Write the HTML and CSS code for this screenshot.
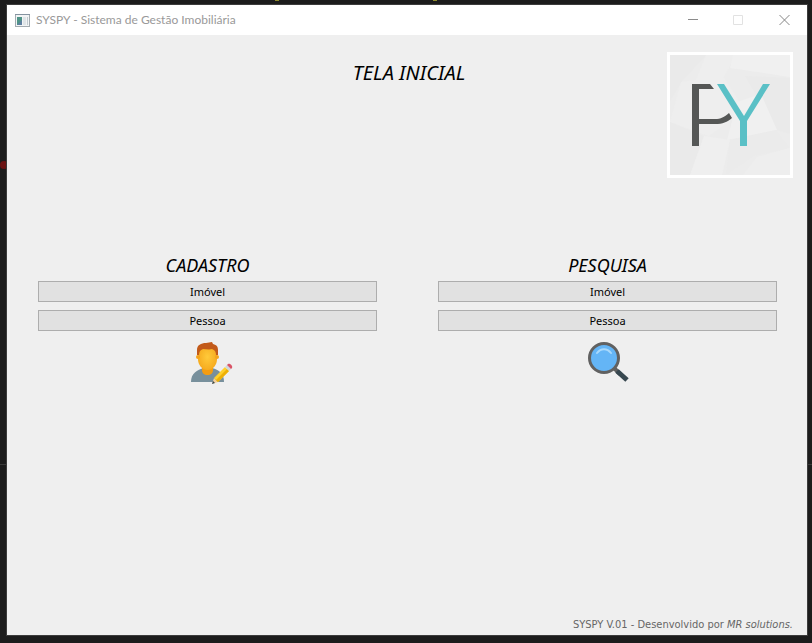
FILE: index.html
```html
<!DOCTYPE html>
<html lang="pt-BR">
<head>
<meta charset="utf-8">
<title>SYSPY - Sistema de Gestão Imobiliária</title>
<link rel="stylesheet" href="styles.css">
</head>
<body>
<svg class="backdrop" aria-hidden="true">
  <path d="M275 0h4M433 0h4" stroke="#8d8a2c" stroke-width="2"/>
  <circle cx="4" cy="165" r="4" fill="#6b1313"/>
  <path d="M0 464.500h812" stroke="#3a3a3a"/>
</svg>
<div class="window">
  <header class="titlebar">
    <svg class="app-icon" width="15" height="13" viewBox="0 0 15 13" aria-hidden="true">
      <rect x=".5" y=".5" width="14" height="12" fill="#f2f4f5" stroke="#a3abb0"/>
      <path d="M0 .5h15" stroke="#8593a0"/>
      <rect x="2" y="3" width="5" height="8" fill="#4f9488"/>
      <path d="M2 11l5-5v5z" fill="#5f7fa0"/>
      <rect x="8" y="3" width="3" height="8" fill="#dfe4e7"/>
      <rect x="12" y="3" width="1" height="8" fill="#c2cbd0"/>
    </svg>
    <span class="caption">SYSPY - Sistema de Gestão Imobiliária</span>
    <div class="controls">
      <button type="button" aria-label="Minimizar"><svg width="11" height="11" viewBox="0 0 11 11"><path d="M1 4.500h10" stroke="#8b8b8b"/></svg></button>
      <button type="button" aria-label="Maximizar" disabled><svg width="11" height="11" viewBox="0 0 11 11"><path d="M.5 .5h9v9h-9z" fill="none" stroke="#e2e2e2"/></svg></button>
      <button type="button" aria-label="Fechar"><svg width="11" height="11" viewBox="0 0 11 11"><path d="M.5 0l10 10M10.500 0l-10 10" stroke="#858585"/></svg></button>
    </div>
  </header>
  <main class="content">
    <div class="top">
      <h1>TELA INICIAL</h1>
      <svg class="logo" width="126" height="126" viewBox="0 0 126 126" role="img" aria-label="PY">
        <rect width="126" height="126" fill="#fff"/>
        <rect x="3" y="3" width="120" height="120" fill="#ececec"/>
        <path d="M3 3h36l-24 26-12 20z" fill="#eaeaea"/>
        <path d="M39 3h30l-12 22-30 8z" fill="#eee"/>
        <path d="M66 3h57v22l-60-9z" fill="#f0f0f0"/>
        <path d="M14 30l42-6 22 34-36 26-39-14z" fill="#eee"/>
        <path d="M78 24l45 2v56l-14-4z" fill="#eaeaea"/>
        <path d="M70 50l24-8 16 36-50 10z" fill="#f0f0f0"/>
        <path d="M3 70l34 14-14 39H3z" fill="#eaeaea"/>
        <path d="M37 84l26 4-8 35H23z" fill="#efefef"/>
        <path d="M63 88l46-10 14 18-36 8-28 19z" fill="#ebebeb"/>
        <path d="M123 96v27H76l14-18z" fill="#eee"/>
        <path d="M25 32h18l4 5H32v30h16c6 0 9-2 14-6l3 5c-5 4-9 6-17 6H32v22h-7z" fill="#555756"/>
        <path d="M50 32h7l20 32 19-32h7L80 69v25h-7V69z" fill="#5ac0c6"/>
      </svg>
    </div>
    <div class="groups">
      <section class="group">
        <h2>CADASTRO</h2>
        <button type="button">Imóvel</button>
        <button type="button">Pessoa</button>
        <svg class="picture" width="50" height="44" viewBox="-8 0 50 44" aria-hidden="true">
          <defs>
            <radialGradient id="skin">
              <stop offset="0" stop-color="#ffca3a"/>
              <stop offset="1" stop-color="#f6ac20"/>
            </radialGradient>
          </defs>
          <path d="M0 41c0-9 6-12 13-14h8c7 2 12 5 12 14z" fill="#78909c"/>
          <path d="M11 24h11v5c0 3-2 5-5.500 5S11 32 11 29z" fill="#f39c12"/>
          <path d="M7 9c0-4 4-6 9.500-6S26 5 26 9v9c0 6-4 11-9.500 11S7 24 7 18z" fill="url(#skin)"/>
          <circle cx="7" cy="16" r="2" fill="#f5a31b"/>
          <circle cx="26" cy="16" r="2" fill="#f5a31b"/>
          <path d="M6 14V9c0-5 4-7 9-7l6-1 1 2c4 1 5 3 5 6v5h-2c0-3-1-5-4-6-3 1-6 0-9 0-3 1-4 3-4 6z" fill="#c25a1a"/>
          <path d="M21 43l2-6 4 4z" fill="#f3cf9b"/>
          <path d="M21 43l1-3 2 2z" fill="#37474f"/>
          <path d="M23 37l11-11 4 4-11 11z" fill="#ffd02b"/>
          <path d="M25 39l11-11 2 2-11 11z" fill="#edb006"/>
          <path d="M34 26l2-2 4 4-2 2z" fill="#cfd8dc"/>
          <path d="M36 24l1-1c2-1 5 2 4 4l-1 1z" fill="#d95366"/>
        </svg>
      </section>
      <section class="group">
        <h2>PESQUISA</h2>
        <button type="button">Imóvel</button>
        <button type="button">Pessoa</button>
        <svg class="picture" width="42" height="44" viewBox="0 0 42 44" aria-hidden="true">
          <path d="M26 26l7 7" stroke="#616161" stroke-width="4"/>
          <path d="M30 30l10 9" stroke="#37474f" stroke-width="5"/>
          <circle cx="17" cy="17" r="14.500" fill="#64b5f6" stroke="#616161" stroke-width="3"/>
          <path d="M10 12c4-5 10-5 14 0" fill="none" stroke="#a9d9fc" stroke-width="2" stroke-linecap="round"/>
        </svg>
      </section>
    </div>
    <footer>SYSPY V.01 - Desenvolvido por <em>MR solutions.</em></footer>
  </main>
</div>
</body>
</html>
```
FILE: styles.css
```css
* {
  box-sizing: border-box;
}

body {
  margin: 0;
  min-height: 100vh;
  padding: 5px 5px 8px 7px;
  display: flex;
  background: #1c1c1c;
  font-family: "Noto Sans", sans-serif;
  color: #000;
}

.backdrop {
  position: absolute;
  inset: 0;
  width: 100%;
  height: 100%;
}

.window {
  position: relative;
  flex: 1;
  display: flex;
  flex-direction: column;
  background: #efefef;
  outline: 1px solid #3c3c3c;
}

.titlebar {
  display: flex;
  align-items: center;
  height: 30px;
  padding-left: 8px;
  gap: 6px;
  background: #fff;
}

.caption {
  flex: 1;
  font-family: Lato, sans-serif;
  font-size: 12px;
  line-height: 16px;
  color: #999;
}

.controls {
  display: flex;
}

.controls button {
  width: 46px;
  height: 30px;
  padding: 0;
  border: 0;
  background: none;
  display: flex;
  align-items: center;
  justify-content: center;
}

.content {
  flex: 1;
  display: flex;
  flex-direction: column;
  padding: 17px 14px 0;
}

.top {
  display: grid;
  grid-template-columns: 130px 1fr 126px;
  align-items: start;
}

h1,
h2 {
  margin: 0;
  font-weight: 400;
  font-style: italic;
  text-align: center;
}

h1 {
  grid-column: 2;
  padding-top: 9px;
  font-size: 20px;
  line-height: 24px;
}

.groups {
  display: grid;
  grid-template-columns: 1fr 1fr;
  gap: 61px;
  margin-top: 75px;
  padding: 0 16px 0 17px;
}

.group {
  display: flex;
  flex-direction: column;
  gap: 8px;
}

h2 {
  padding-top: 2px;
  margin-bottom: -2px;
  font-size: 18px;
  line-height: 20px;
}

.group button {
  height: 21px;
  padding: 0;
  border: 1px solid #adadad;
  background: #e1e1e1;
  font-family: inherit;
  font-size: 11px;
  line-height: 16px;
  color: #000;
}

.picture {
  align-self: center;
  margin-top: 2px;
}

footer {
  margin-top: auto;
  padding-bottom: 2px;
  text-align: right;
  font-family: "DejaVu Sans Condensed", "DejaVu Sans", sans-serif;
  font-size: 11px;
  line-height: 16px;
  color: #666;
}
```
